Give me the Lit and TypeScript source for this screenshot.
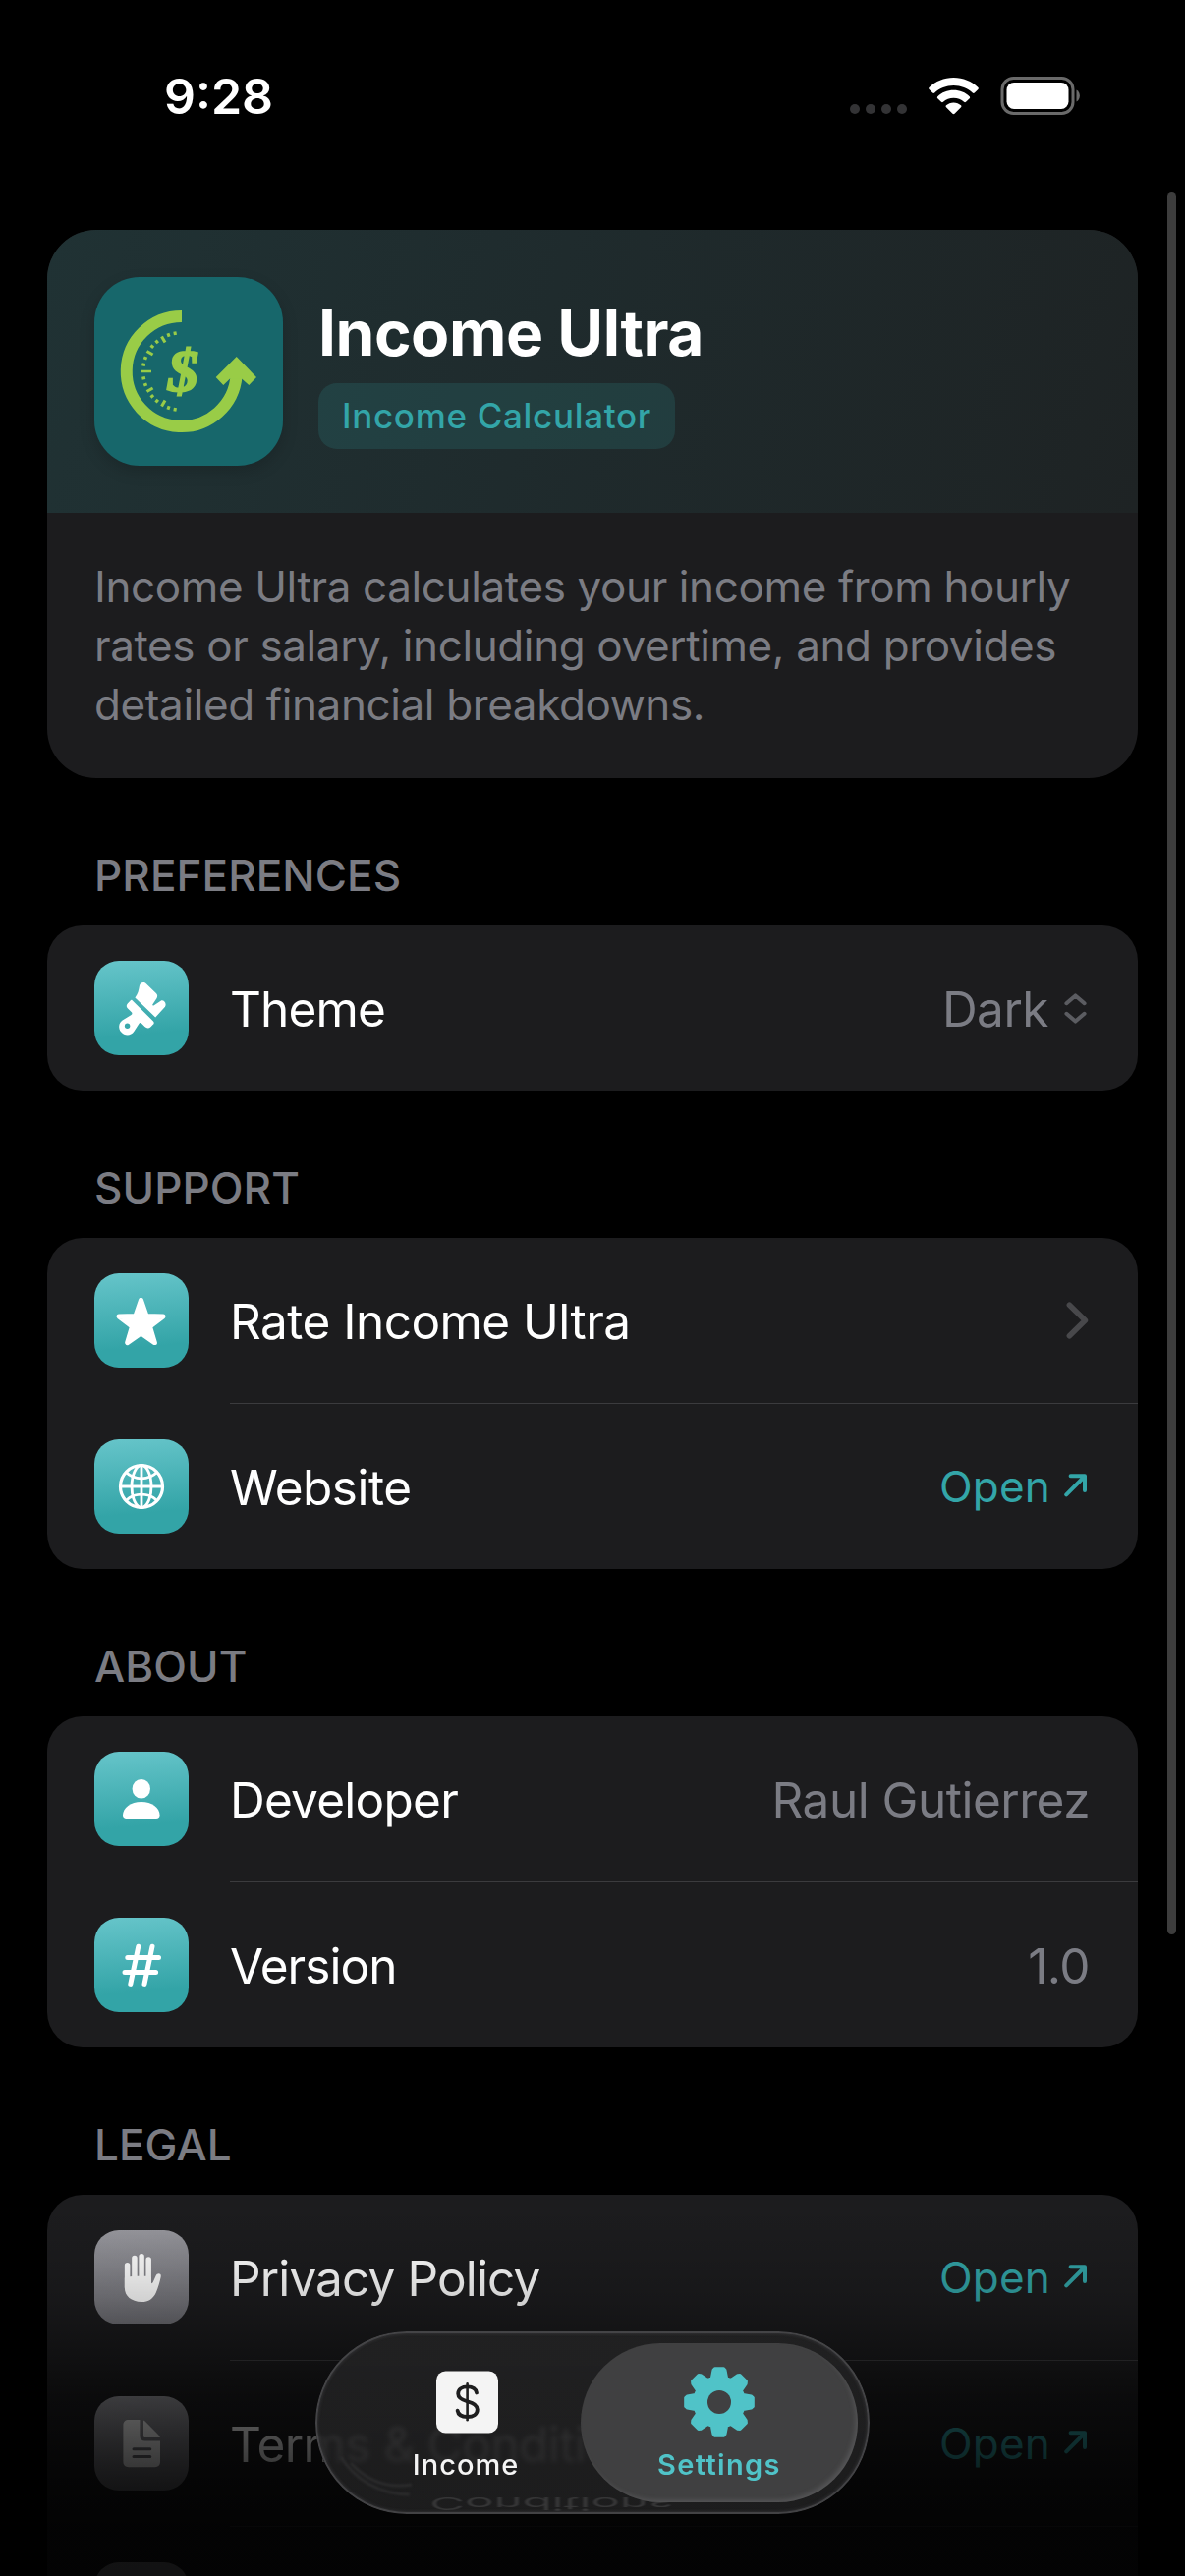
import { LitElement, html, svg, css, nothing } from "lit";
import type { TemplateResult, SVGTemplateResult } from "lit";
import { customElement, property } from "lit/decorators.js";
import { styleMap } from "lit/directives/style-map.js";

type Accessory = "open" | "picker" | "chevron" | "value" | "none";

interface Row {
  icon: string;
  label: string;
  tone: "teal" | "gray";
  accessory: Accessory;
  value?: string;
  tracking?: number;
}

interface Section {
  title: string;
  rows: Row[];
}

const SECTIONS: Section[] = [
  {
    title: "PREFERENCES",
    rows: [{ icon: "brush", label: "Theme", tone: "teal", accessory: "picker", value: "Dark", tracking: -0.86 }],
  },
  {
    title: "SUPPORT",
    rows: [
      { icon: "star", label: "Rate Income Ultra", tone: "teal", accessory: "chevron", tracking: -0.54 },
      { icon: "globe", label: "Website", tone: "teal", accessory: "open" },
    ],
  },
  {
    title: "ABOUT",
    rows: [
      { icon: "person", label: "Developer", tone: "teal", accessory: "value", value: "Raul Gutierrez", tracking: -0.75 },
      { icon: "number", label: "Version", tone: "teal", accessory: "value", value: "1.0", tracking: -0.95 },
    ],
  },
  {
    title: "LEGAL",
    rows: [
      { icon: "hand", label: "Privacy Policy", tone: "gray", accessory: "open", tracking: -0.87 },
      { icon: "doc", label: "Terms & Conditions", tone: "gray", accessory: "open", tracking: -0.6 },
      { icon: "none", label: "", tone: "gray", accessory: "none" },
    ],
  },
];

/** Glyphs drawn on a 96 x 96 tile. */
const GLYPHS: Record<string, SVGTemplateResult> = {
  brush: svg`
    <path fill="#fff" d="M41.4 37.4 C44.4 33.6 45.2 29.6 45.9 25.4 C46.6 21.8 50.4 20.8 53 23.4 L62.6 32.8 C64.4 34.6 64.6 36.2 63.4 38.2 L59.4 44.2 C58.8 45.4 59.8 46 60.8 45.2 L67.6 40.8 C70 39 74.2 43 72 46.8 L62.2 57.6 Z"/>
    <path fill="#fff" d="M38.6 40.2 L60 61.4 C61.2 62.8 60.8 63.8 59.8 64.8 L57.4 67.2 C55.4 69 53.2 68.6 51.4 67 L48.4 64 C47.2 62.8 46.2 62.8 45.4 64 L40.4 71.8 C37 77 30.4 76.2 27.4 72.6 C24 68.6 24.6 63.4 28.6 60.4 L37.2 55.2 C38.8 54.2 38.8 53.2 37.6 52 L34 48.4 C32.4 46.8 32.4 45 33.8 43.4 L36.4 40.8 C37.2 39.8 37.8 39.6 38.6 40.2 Z"/>
    <circle cx="33.6" cy="66.3" r="2.7" fill="#39a9ac"/>`,
  star: svg`<path fill="#fff" stroke="#fff" stroke-width="5" stroke-linejoin="round"
      d="M47.5 27.4 L53.1 43.6 L70 43.9 L56.5 54.3 L61.4 70.6 L47.5 60.9 L33.6 70.6 L38.5 54.3 L25 43.9 L41.9 43.6 Z"/>`,
  globe: svg`
    <g fill="none" stroke="#fff" stroke-width="2.8">
      <circle cx="48" cy="48" r="21.5" stroke-width="3.2"/>
      <ellipse cx="48" cy="48" rx="10" ry="21.5"/>
      <path d="M48 26.5 V69.5 M26.5 48 H69.5"/>
      <path d="M32.3 33.6 C37 38.4 43 39.8 48 39.8 S59 38.4 63.7 33.6"/>
      <path d="M32.3 62.4 C37 57.6 43 56.2 48 56.2 S59 57.6 63.7 62.4"/>
    </g>`,
  person: svg`
    <g fill="#fff">
      <ellipse cx="47.8" cy="37.8" rx="9.2" ry="9.8"/>
      <path d="M29 64.6 C29 57.2 37 51 47.8 51 S66.6 57.2 66.6 64.6 C66.6 67 65.2 68 63 68 H32.6 C30.4 68 29 67 29 64.6 Z"/>
    </g>`,
  number: svg`<path fill="none" stroke="#fff" stroke-width="5" stroke-linecap="round"
      d="M44.8 29.3 L36.8 67.4 M59 29.3 L51 67.4 M33.8 40.5 H65.5 M31 55.5 H62.6"/>`,
  hand: svg`
    <path fill="none" stroke="#fff" stroke-width="5.5" stroke-linecap="round" d="M33.6 35.8 V58 M40.9 28.6 V56 M48.1 26.8 V56 M55.2 30 V56"/>
    <path fill="#fff" d="M30.85 48.4 C35 47.4 38 47 41 46.8 H55 L57.95 48 V53 C58 54.6 59 54.4 59.7 53 L62.6 46.4 C64 43.2 68.6 43.6 67.7 47.6 C66.6 53 65 58.4 62.8 63.4 C60 69.6 55.2 73 48 73 C37.6 73 30.85 67.2 30.85 58.6 Z"/>`,
  doc: svg`
    <path fill="#fff" d="M35 24 H46.4 V40.4 C46.4 43.8 48.4 45.4 51.4 45.4 H67 V66.6 C67 70.4 65 72.2 61.6 72.2 H35 C31.4 72.2 29.4 70.2 29.4 66.6 V29.6 C29.4 26 31.4 24 35 24 Z"/>
    <path fill="#fff" d="M50 24.4 C51 24.8 51.8 25.6 52.6 26.4 L65 39 C66 40 66.6 41 66.9 42 H51.4 C50.4 42 50 41.6 50 40.6 Z"/>
    <path fill="none" stroke="#707076" stroke-width="3" stroke-linecap="round" d="M40 53.7 H56.8 M40 61.6 H56.8"/>`,
};

const openArrow = html`<svg class="acc" width="27" height="34" viewBox="0 0 27 34" fill="none" stroke="currentColor" stroke-width="4" stroke-linecap="round" stroke-linejoin="round"><path d="M2.2 25.3 L20.5 7 M6.6 6.2 H21 V21"/></svg>`;
const pickerChevrons = html`<svg class="acc dim" width="27" height="34" viewBox="0 0 27 34" fill="none" stroke="currentColor" stroke-width="4" stroke-linecap="round" stroke-linejoin="round"><path d="M2.4 12.2 L11.5 4.4 L20.6 12.2 M2.4 22.8 L11.5 30.6 L20.6 22.8"/></svg>`;
const chevron = html`<svg class="acc faint" width="27" height="42" viewBox="0 0 27 42" fill="none" stroke="currentColor" stroke-width="5.6" stroke-linecap="round" stroke-linejoin="round"><path d="M5.4 5.2 L21.4 21 L5.4 36.8"/></svg>`;

const polar = (cx: number, cy: number, r: number, deg: number): [number, number] => [
  cx + r * Math.cos((deg * Math.PI) / 180),
  cy + r * Math.sin((deg * Math.PI) / 180),
];

/** Eight-tooth cog outline centred in a 72 x 72 box. */
const gearPath = (): string => {
  const pts: string[] = [];
  for (let i = 0; i < 8; i++) {
    for (const [offset, r] of [[-17.5, 25.4], [-10.5, 33], [-7.4, 34.6], [7.4, 34.6], [10.5, 33], [17.5, 25.4]]) {
      const [x, y] = polar(36, 36, r, i * 45 + offset);
      pts.push(`${x.toFixed(2)} ${y.toFixed(2)}`);
    }
  }
  return `M${pts.join(" L")} Z`;
};

/** Clock ticks on the left half of the app logo: a dash every 30 degrees, dots between. */
const logoTicks = (): SVGTemplateResult[] =>
  [-80, -70, -60, -50, -40, -30, -20, -10, 0, 10, 20, 30, 40, 50, 60, 70, 80].map((a) => {
    const major = a % 30 === 0;
    const outer = a === 0 ? 42 : major ? 41 : 41.2;
    const inner = a === 0 ? 31 : major ? 34 : 37.6;
    const [x1, y1] = polar(89, 96, outer, 180 + a);
    const [x2, y2] = polar(89, 96, inner, 180 + a);
    return svg`<line x1=${x1} y1=${y1} x2=${x2} y2=${y2} stroke-width=${a === 0 ? 2.3 : 3.1}></line>`;
  });

@customElement("app-tile")
export class AppTile extends LitElement {
  @property() icon = "";
  @property() tone = "teal";

  static styles = css`
    :host { display: block; flex: none; }
    .tile { width: 96px; height: 96px; border-radius: 25px; overflow: hidden; }
    .teal { background: linear-gradient(175deg, #65c4c9 2%, #33a4a7 76%); }
    .gray { background: linear-gradient(175deg, #98989e 2%, #707076 96%); }
    svg { display: block; }
  `;

  render() {
    return html`<div class="tile ${this.tone}">
      <svg width="96" height="96" viewBox="0 0 96 96">${GLYPHS[this.icon] ?? nothing}</svg>
    </div>`;
  }
}

@customElement("settings-row")
export class SettingsRow extends LitElement {
  @property({ attribute: false }) row!: Row;

  static styles = css`
    :host { display: block; }
    .row { display: flex; align-items: center; height: 168px; padding: 0 48px; }
    .label { margin-left: 42px; padding-top: 2px; font-size: 49.5px; line-height: 60px; color: #fff; letter-spacing: -0.52px; white-space: nowrap; flex: 1; }
    .side { display: flex; align-items: center; gap: 14px; color: #7b7c84; font-size: 49.5px; line-height: 60px; letter-spacing: -0.5px; white-space: nowrap; }
    .value { padding-top: 2px; margin-right: 1px; }
    .picker { gap: 16px; }
    .picker .value { margin-right: 0; }
    .open { color: #33a5a8; font-size: 44px; letter-spacing: 0.2px; }
    .acc { display: block; }
    .dim { color: #5b5c61; }
    .faint { color: #48484b; }
  `;

  private accessory(): TemplateResult | typeof nothing {
    const { accessory, value } = this.row;
    switch (accessory) {
      case "open":
        return html`<div class="side open"><span>Open</span>${openArrow}</div>`;
      case "picker":
        return html`<div class="side picker"><span class="value">${value}</span>${pickerChevrons}</div>`;
      case "chevron":
        return html`<div class="side">${chevron}</div>`;
      case "value":
        return html`<div class="side"><span class="value">${value}</span></div>`;
      default:
        return nothing;
    }
  }

  render() {
    const { icon, tone, label, tracking } = this.row;
    return html`<div class="row">
      <app-tile .icon=${icon} .tone=${tone}></app-tile>
      <span class="label" style=${styleMap(tracking !== undefined ? { letterSpacing: `${tracking}px` } : {})}>${label}</span>
      ${this.accessory()}
    </div>`;
  }
}

@customElement("hero-card")
export class HeroCard extends LitElement {
  static styles = css`
    :host { display: block; }
    .card { border-radius: 50px; overflow: hidden; background: #1c1c1e; height: 558px; }
    .top { display: flex; align-items: center; gap: 36px; height: 288px; padding: 0 48px; box-sizing: border-box;
      background: linear-gradient(105deg, #203234 0%, #1f2b2d 45%, #1e2324 100%); }
    .logo { flex: none; width: 192px; height: 192px; border-radius: 46px; background: #17676b; box-shadow: 0 6px 16px rgba(0, 0, 0, 0.16); }
    .logo svg { display: block; }
    .info { display: flex; flex-direction: column; align-items: flex-start; gap: 12px; }
    .name { font-size: 64px; font-weight: 700; line-height: 78px; color: #fff; letter-spacing: -0.45px; white-space: nowrap; }
    .badge { height: 67px; line-height: 67px; padding: 0 24px; border-radius: 19px; background: rgba(51, 165, 168, 0.16);
      color: #33a5a8; font-size: 35px; font-weight: 500; letter-spacing: 0.68px; white-space: nowrap; }
    .about { margin: 0; padding: 45px 48px; font-size: 44px; line-height: 60px; color: #7b7c83; letter-spacing: -0.38px; white-space: nowrap; }
    .dollar { font: italic 700 62px "Liberation Serif", serif; }
  `;

  render() {
    return html`<div class="card">
      <div class="top">
        <div class="logo">
          <svg width="192" height="192" viewBox="0 0 192 192">
            <path d="M89 40 A56 56 0 1 0 144.6 100" fill="none" stroke="#99cc47" stroke-width="12"/>
            <path d="M144.7 81 L165 102 L157.3 110 L149.7 103.3 H138.3 L131.3 110 L123.7 102 Z" fill="#99cc47"/>
            <g stroke="#99cc47">${logoTicks()}</g>
            <text class="dollar" x="90.5" y="115.5" text-anchor="middle" fill="#99cc47" stroke="#99cc47" stroke-width="2">$</text>
          </svg>
        </div>
        <div class="info">
          <div class="name">Income Ultra</div>
          <div class="badge">Income Calculator</div>
        </div>
      </div>
      <p class="about">Income Ultra calculates your income from hourly<br>rates or salary, including overtime, and provides<br>detailed financial breakdowns.</p>
    </div>`;
  }
}

@customElement("status-bar")
export class StatusBar extends LitElement {
  static styles = css`
    :host { display: block; flex: none; }
    .bar { display: flex; align-items: flex-start; justify-content: space-between; height: 234px; padding: 68px 107px 0 167px; box-sizing: border-box; }
    .time { font-size: 50px; font-weight: 600; line-height: 60px; color: #fff; letter-spacing: 0; }
    .icons { padding-top: 9px; }
    svg { display: block; }
  `;

  render() {
    return html`<div class="bar">
      <div class="time">9:28</div>
      <svg class="icons" width="235" height="42" viewBox="864 77 235 42">
        <g fill="#333335">
          <circle cx="870" cy="111" r="5"/><circle cx="886" cy="111" r="5"/><circle cx="902" cy="111" r="5"/><circle cx="918" cy="111" r="5"/>
        </g>
        <g fill="#fff">
          <path d="M970.5 79 C980.2 79 989 82.8 995.4 88.9 C996 89.5 996 90.3 995.4 90.9 L991.8 94.5 C991.2 95.1 990.4 95.1 989.8 94.5 C984.7 89.8 978 87 970.5 87 C963 87 956.3 89.8 951.2 94.5 C950.6 95.1 949.8 95.1 949.2 94.5 L945.6 90.9 C945 90.3 945 89.5 945.6 88.9 C952 82.8 960.8 79 970.5 79 Z"/>
          <path d="M970.5 91.8 C976.8 91.8 982.5 94.2 986.7 98.2 C987.3 98.8 987.3 99.6 986.7 100.2 L983 103.8 C982.4 104.4 981.7 104.4 981.1 103.8 C978.3 101.3 974.6 99.8 970.5 99.8 C966.4 99.8 962.7 101.3 959.9 103.8 C959.3 104.4 958.6 104.4 958 103.8 L954.3 100.2 C953.7 99.6 953.7 98.8 954.3 98.2 C958.5 94.2 964.2 91.8 970.5 91.8 Z"/>
          <path d="M970.5 104.4 C973.4 104.4 976 105.5 978 107.3 C978.6 107.9 978.6 108.7 978 109.3 L971.5 115.7 C970.9 116.3 970.1 116.3 969.5 115.7 L963 109.3 C962.4 108.7 962.4 107.9 963 107.3 C965 105.5 967.6 104.4 970.5 104.4 Z"/>
        </g>
        <rect x="1020" y="79.5" width="72" height="36" rx="11.5" fill="none" stroke="#6a6a6a" stroke-width="3"/>
        <rect x="1024.5" y="84" width="63" height="27" rx="7.5" fill="#fff"/>
        <path d="M1095.5 91.5 C1100 93.4 1100 101.6 1095.5 103.5 Z" fill="#6a6a6a"/>
      </svg>
    </div>`;
  }
}

@customElement("tab-bar")
export class TabBar extends LitElement {
  static styles = css`
    :host { display: block; }
    .bar { position: relative; display: flex; width: 564px; height: 186px; box-sizing: border-box; padding: 12px; border-radius: 93px; overflow: hidden;
      background: linear-gradient(180deg, rgba(36, 36, 37, 0.82), rgba(37, 37, 38, 0.74)); backdrop-filter: blur(2.4px); }
    .rim { position: absolute; inset: 0; border-radius: 93px; border: 2.5px solid rgba(98, 98, 102, 0.55); box-sizing: border-box;
      box-shadow: inset 0 0 3px 1px rgba(110, 110, 116, 0.22); }
    .swoosh { position: absolute; left: 20px; bottom: 6px; filter: blur(1px); }
    .echo { position: absolute; left: 116px; bottom: -19px; transform: scaleY(-0.36); filter: blur(1px);
      font-size: 49.5px; line-height: 60px; letter-spacing: -0.2px; color: #363637; white-space: nowrap; }
    .tab { position: relative; display: flex; flex-direction: column; align-items: center; gap: 10px; width: 282px; height: 162px; padding-top: 24px;
      box-sizing: border-box; border-radius: 81px; color: #f4f4f4; }
    .tab + .tab { margin-left: -24px; }
    .active { color: #50c3c8; background: #404041; box-shadow: inset -3px -3px 5px -1px rgba(150, 150, 155, 0.26); }
    .label { font-size: 29px; font-weight: 500; line-height: 36px; letter-spacing: 1px; }
    .active .label { font-weight: 600; letter-spacing: 1.35px; }
    .glyph { display: block; }
  `;

  render() {
    return html`<nav class="bar">
      <svg class="swoosh" width="90" height="56" viewBox="0 0 90 56" fill="none" stroke="#2c2c2d" stroke-width="3"><path d="M6 4 C20 26 44 42 76 42 M16 10 C34 30 54 36 78 32"/></svg>
      <span class="echo" aria-hidden="true">Conditions</span>
      <div class="rim"></div>
      <div class="tab">
        <svg class="glyph" width="72" height="72" viewBox="0 0 72 72">
          <rect x="6" y="4.5" width="63" height="63" rx="9.5" fill="#f4f4f4"/>
          <g fill="none" stroke="#1e1e1f" stroke-linecap="round" transform="translate(1 0)">
            <path stroke-width="3.8" d="M46 26.5 C45.3 22.6 41.6 20.4 36.7 20.4 C31.2 20.4 27.2 23 27.2 27.6 C27.2 32 30.6 33.8 36.7 35.3 C43 36.8 46.8 38.8 46.8 43.6 C46.8 48.4 42.6 51 36.7 51 C31 51 27.2 48.6 26.6 44.6"/>
            <path stroke-width="2.6" d="M36.6 17.4 V54.2"/>
          </g>
        </svg>
        <span class="label">Income</span>
      </div>
      <div class="tab active">
        <svg class="glyph" width="72" height="72" viewBox="0 0 72 72">
          <path d="${gearPath()}" fill="#50c3c8" stroke="#50c3c8" stroke-width="3" stroke-linejoin="round"/>
          <circle cx="36" cy="36" r="12" fill="#404041"/>
        </svg>
        <span class="label">Settings</span>
      </div>
    </nav>`;
  }
}

@customElement("app-root")
export class AppRoot extends LitElement {
  static styles = css`
    :host { display: block; }
    .screen { position: relative; display: flex; flex-direction: column; width: 1206px; height: 2622px; overflow: hidden; background: #000;
      font-family: Inter, "Liberation Sans", sans-serif; }
    .content { display: flex; flex-direction: column; padding: 0 48px; }
    .title { margin: 0; padding: 69px 48px 21px; font-size: 44px; line-height: 60px; font-weight: 500; color: #7b7c83; letter-spacing: 0.08px; }
    .group { border-radius: 36px; overflow: hidden; background: #1c1c1e; }
    .divider { height: 1px; margin-left: 186px; background: #3b3b3e; }
    .scroll { position: absolute; left: 1188px; top: 195px; width: 9px; height: 1774px; border-radius: 5px; background: #3d3d3d; }
    .fade { position: absolute; left: 0; right: 0; bottom: 0; height: 402px;
      background: linear-gradient(180deg,
        rgba(0,0,0,0) 0px, rgba(0,0,0,0.02) 40px, rgba(0,0,0,0.1) 90px, rgba(0,0,0,0.18) 122px, rgba(0,0,0,0.27) 146px,
        rgba(0,0,0,0.43) 182px, rgba(0,0,0,0.62) 222px, rgba(0,0,0,0.7) 256px, rgba(0,0,0,0.78) 290px,
        rgba(0,0,0,0.84) 320px, rgba(0,0,0,0.88) 350px, rgba(0,0,0,0.88) 402px); }
    .tabs { position: absolute; left: 321px; bottom: 63px; }
  `;

  render() {
    return html`<div class="screen">
      <status-bar></status-bar>
      <main class="content">
        <hero-card></hero-card>
        ${SECTIONS.map(
          (section) => html`<section>
            <h2 class="title">${section.title}</h2>
            <div class="group">
              ${section.rows.map(
                (row, i) => html`${i > 0 ? html`<div class="divider"></div>` : nothing}<settings-row .row=${row}></settings-row>`,
              )}
            </div>
          </section>`,
        )}
      </main>
      <div class="scroll"></div>
      <div class="fade"></div>
      <tab-bar class="tabs"></tab-bar>
    </div>`;
  }
}
